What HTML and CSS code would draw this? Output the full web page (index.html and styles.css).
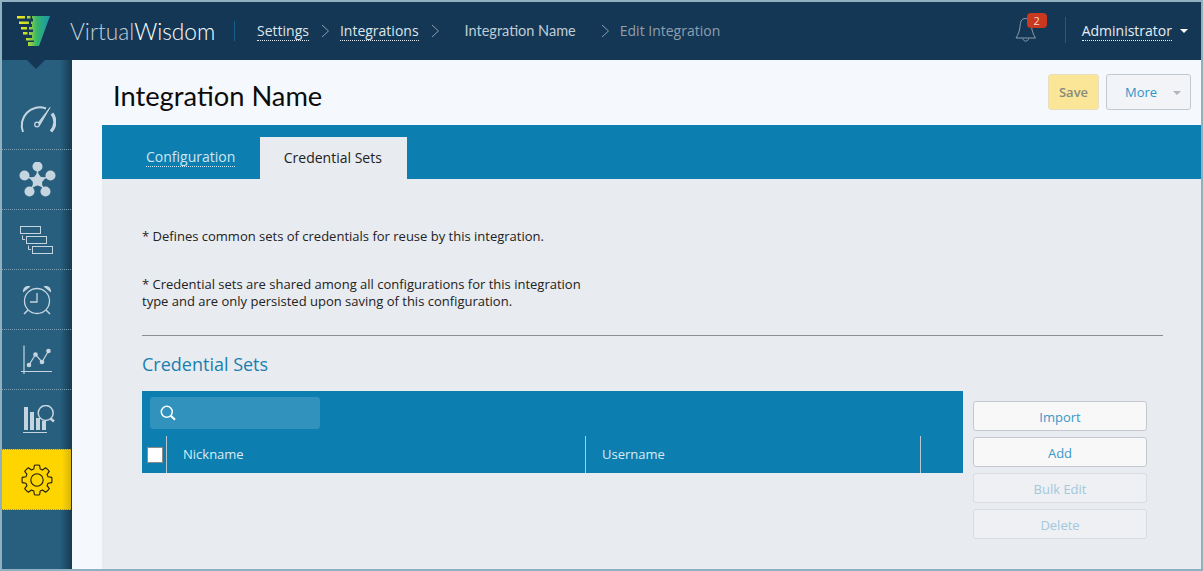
FILE: index.html
```html
<!DOCTYPE html>
<html lang="en">
<head>
    <meta charset="UTF-8">
    <meta name="viewport" content="width=device-width, initial-scale=1.0">
    <title>Edit Integration</title>
    <link rel="stylesheet" href="styles.css">
</head>
<body>
    <div class="frame">
        <header class="topbar">
            <div class="logo">
                <svg class="logo-mark" width="34" height="32" viewBox="0 0 34 32">
                    <defs>
                        <linearGradient id="funnel" gradientUnits="userSpaceOnUse" x1="0" y1="0" x2="33" y2="0">
                            <stop offset="0" stop-color="#f7e81b"/>
                            <stop offset="0.3" stop-color="#c5dc2b"/>
                            <stop offset="0.6" stop-color="#35b56a"/>
                            <stop offset="1" stop-color="#1a97b0"/>
                        </linearGradient>
                    </defs>
                    <g fill="url(#funnel)">
                        <path d="M15 0H33L22 30H11V26H17V24.500H9V22H15V19H12V16H16V13.500H12V11H15V8H14V5.500H16V2.500H15Z"/>
                        <rect x="0" y="0" width="8" height="2.500"/>
                        <rect x="10" y="0" width="3.500" height="2.500"/>
                        <rect x="2" y="5.500" width="10" height="2.500"/>
                        <rect x="4" y="11" width="6" height="2.500"/>
                        <rect x="6" y="16" width="4.500" height="2.500"/>
                    </g>
                </svg>
                <span class="logo-text"><span class="logo-thin">Virtual</span>Wisdom</span>
            </div>
            <nav class="crumbs">
                <a class="crumb link">Settings</a>
                <svg class="chev" width="9" height="14" viewBox="0 0 9 14"><path d="M1 1l6.500 6L1 13" fill="none" stroke="#8b9fb0" stroke-width="1"/></svg>
                <a class="crumb link">Integrations</a>
                <svg class="chev" width="9" height="14" viewBox="0 0 9 14"><path d="M1 1l6.500 6L1 13" fill="none" stroke="#8b9fb0" stroke-width="1"/></svg>
                <span class="crumb name">Integration Name</span>
                <svg class="chev" width="9" height="14" viewBox="0 0 9 14"><path d="M1 1l6.500 6L1 13" fill="none" stroke="#8b9fb0" stroke-width="1"/></svg>
                <span class="crumb current">Edit Integration</span>
            </nav>
            <div class="user-area">
                <div class="bell">
                    <svg width="22" height="26" viewBox="0 0 22 26">
                        <path d="M10.500 1.500C6 1.500 5.500 5 5 10 4.600 14 3 18 1 21H20.500C18.500 18 17 14 16.500 10 16 5 15 1.500 10.500 1.500Z" fill="none" stroke="#8a9cab" stroke-width="1"/>
                        <path d="M8 21.500C8 25 13.500 25 13.500 21.500" fill="none" stroke="#8a9cab" stroke-width="1"/>
                    </svg>
                    <span class="badge">2</span>
                </div>
                <a class="user link">Administrator</a>
                <span class="caret"></span>
            </div>
        </header>
        <div class="main">
            <aside class="sidenav">
                <span class="notch"></span>
                <div class="nav-item">
                    <svg width="38" height="30" viewBox="0 0 38 30" fill="none" stroke="#c5d5df">
                        <path d="M5 27A18 18 0 0 1 28 3.500" stroke-width="2"/>
                        <path d="M34 8.500C38 14 38 21 33 26.500" stroke-width="3.200"/>
                        <circle cx="19" cy="19.500" r="2.300" stroke-width="1.300"/>
                        <path d="M20.500 17.500L32 2.500 21.500 20.500" stroke-width="1" fill="#c5d5df"/>
                    </svg>
                </div>
                <div class="nav-item">
                    <svg width="38" height="36" viewBox="0 0 38 36" fill="#c5d5df" stroke="#c5d5df">
                        <circle cx="19.500" cy="4.500" r="5" stroke="none"/>
                        <circle cx="6.500" cy="13.500" r="5" stroke="none"/>
                        <circle cx="32.500" cy="13.500" r="5" stroke="none"/>
                        <circle cx="11.500" cy="29.500" r="5" stroke="none"/>
                        <circle cx="27.500" cy="29.500" r="5" stroke="none"/>
                        <path d="M19.500 12L21.700 15.400 25.700 16.500 23.100 19.700 23.300 23.800 19.500 22.300 15.700 23.800 15.900 19.700 13.300 16.500 17.300 15.400Z" stroke-width="2" stroke-linejoin="round"/>
                        <path d="M19.500 8v6M9 15l7 2M30 15l-7 2M13 27l3-4M26 27l-3-4" stroke-width="1.500"/>
                    </svg>
                </div>
                <div class="nav-item">
                    <svg width="36" height="30" viewBox="0 0 36 30" fill="none" stroke="#c5d5df" stroke-width="1">
                        <rect x="1.500" y="1.500" width="20" height="7"/>
                        <rect x="7.500" y="11.500" width="20" height="7"/>
                        <rect x="13.500" y="21.500" width="20" height="7"/>
                        <path d="M3.500 10.500v4h2.500M9.500 20.500v4h2.500"/>
                    </svg>
                </div>
                <div class="nav-item">
                    <svg width="32" height="32" viewBox="0 0 32 32" fill="none" stroke="#c5d5df">
                        <circle cx="16" cy="17" r="12.500" stroke-width="1.300"/>
                        <path d="M16 9v9H9" stroke-width="1.300"/>
                        <path d="M2 8.500C1.500 4 5 1 9.500 2.500z" fill="#c5d5df" stroke="none"/>
                        <path d="M30 8.500C30.500 4 27 1 22.500 2.500z" fill="#c5d5df" stroke="none"/>
                        <path d="M7 26l-4 4M25 26l4 4" stroke-width="1.500"/>
                    </svg>
                </div>
                <div class="nav-item">
                    <svg width="32" height="30" viewBox="0 0 32 30" fill="#c5d5df" stroke="#c5d5df">
                        <path d="M3 .5V29M0 26.500h31" fill="none" stroke-width="1.200"/>
                        <path d="M8 20l6.500-10.500L21 17 27.500 6" fill="none" stroke-width="1.200"/>
                        <circle cx="8" cy="20" r="2.300" stroke="none"/>
                        <circle cx="14.500" cy="9.500" r="2.300" stroke="none"/>
                        <circle cx="21" cy="17" r="2.300" stroke="none"/>
                        <circle cx="27.500" cy="6" r="2.300" stroke="none"/>
                    </svg>
                </div>
                <div class="nav-item">
                    <svg width="36" height="30" viewBox="0 0 36 30" fill="#c5d5df">
                        <rect x="5" y="2" width="4" height="23"/>
                        <rect x="11" y="7" width="4" height="18"/>
                        <rect x="17" y="13" width="4" height="12"/>
                        <rect x="23" y="16" width="4" height="9"/>
                        <rect x="4" y="27" width="24" height="1"/>
                        <circle cx="26.700" cy="8" r="7.500" fill="#285f7e" stroke="#c5d5df" stroke-width="1.500"/>
                        <path d="M31.500 13.500l3.500 3" stroke="#c5d5df" stroke-width="2.500"/>
                    </svg>
                </div>
                <div class="nav-item active">
                    <svg width="32" height="32" viewBox="0 0 32 32" fill="none" stroke="#1c1c10" stroke-width="1.100" stroke-linejoin="round">
                        <circle cx="16" cy="16" r="6.200"/>
                        <path d="M12.830 4.950L13.400 1.230A15 15 0 0 1 18.600 1.230L19.170 4.950A11.500 11.500 0 0 1 21.570 5.950L24.610 3.720A15 15 0 0 1 28.280 7.390L26.050 10.430A11.500 11.500 0 0 1 27.050 12.830L30.770 13.400A15 15 0 0 1 30.770 18.600L27.050 19.170A11.500 11.500 0 0 1 26.050 21.570L28.280 24.610A15 15 0 0 1 24.610 28.280L21.570 26.050A11.500 11.500 0 0 1 19.170 27.050L18.600 30.770A15 15 0 0 1 13.400 30.770L12.830 27.050A11.500 11.500 0 0 1 10.430 26.050L7.390 28.280A15 15 0 0 1 3.720 24.610L5.950 21.570A11.500 11.500 0 0 1 4.950 19.170L1.230 18.600A15 15 0 0 1 1.230 13.400L4.950 12.830A11.500 11.500 0 0 1 5.950 10.430L3.720 7.390A15 15 0 0 1 7.390 3.720L10.430 5.950A11.500 11.500 0 0 1 12.830 4.950Z"/>
                    </svg>
                </div>
            </aside>
            <div class="content">
                <div class="page-head">
                    <h1 class="page-title">Integration Name</h1>
                    <div class="head-actions">
                        <button class="btn-save">Save</button>
                        <button class="btn-more">More<span class="more-caret"></span></button>
                    </div>
                </div>
                <div class="tabs">
                    <a class="tab link">Configuration</a>
                    <a class="tab active">Credential Sets</a>
                </div>
                <div class="panel">
                    <p class="note first">* Defines common sets of credentials for reuse by this integration.</p>
                    <p class="note">* Credential sets are shared among all configurations for this integration<br>type and are only persisted upon saving of this configuration.</p>
                    <hr class="rule">
                    <h2 class="section-title">Credential Sets</h2>
                    <div class="table-row">
                        <div class="table">
                            <div class="table-search">
                                <div class="search-box">
                                    <svg width="16" height="16" viewBox="0 0 16 16" fill="none" stroke="#fff">
                                        <circle cx="6.800" cy="6.800" r="5.500" stroke-width="1.500"/>
                                        <path d="M10.800 10.800l4.200 4" stroke-width="2"/>
                                    </svg>
                                </div>
                            </div>
                            <div class="table-head">
                                <div class="cell check"><span class="checkbox"></span></div>
                                <div class="cell nick">Nickname</div>
                                <div class="cell username">Username</div>
                                <div class="cell last"></div>
                            </div>
                        </div>
                        <div class="side-actions">
                            <button class="side-btn">Import</button>
                            <button class="side-btn">Add</button>
                            <button class="side-btn disabled">Bulk Edit</button>
                            <button class="side-btn disabled">Delete</button>
                        </div>
                    </div>
                </div>
            </div>
        </div>
    </div>
</body>
</html>
```

FILE: styles.css
```css
html, body {
    margin: 0;
    height: 100%;
}
body {
    font-family: "Open Sans", Arial, sans-serif;
    font-size: 13px;
    color: #222;
    background: #e8ebf0;
}
.frame {
    height: 571px;
    box-sizing: border-box;
    border: 2px solid #8fb0bf;
    display: flex;
    flex-direction: column;
    overflow: hidden;
}
.link {
    border-bottom: 1px dotted currentColor;
}

/* top bar */
.topbar {
    flex: none;
    height: 58px;
    background: #143755;
    display: flex;
    align-items: center;
    color: #fff;
}
.logo {
    display: flex;
    align-items: center;
    width: 233px;
    height: 20px;
    border-right: 1px solid #17608a;
    padding-left: 15px;
    flex: none;
    box-sizing: border-box;
}
.logo-mark {
    flex: none;
    margin-top: 1px;
}
.logo-text {
    margin-left: 19px;
    font-family: Lato, sans-serif;
    font-weight: 300;
    font-size: 22.700px;
    color: #fff;
}
.logo-thin {
    color: #c3ced8;
}
.crumbs {
    display: flex;
    align-items: center;
    margin-left: 22px;
    font-size: 14px;
    color: #dfe6ec;
}
.crumb {
    line-height: 18px;
}
.chev {
    margin: 0 10px 0 12px;
}
.crumb.name {
    font-family: Lato, sans-serif;
    font-size: 14.500px;
    color: #bfccd6;
    margin-left: 15px;
}
.chev:nth-of-type(3) {
    margin: 0 10px 0 25px;
}
.crumb.current {
    color: #8f9fad;
}
.user-area {
    margin-left: auto;
    display: flex;
    align-items: center;
    padding-right: 13px;
}
.bell {
    position: relative;
    width: 50px;
    height: 26px;
    border-right: 1px solid #17608a;
    margin-right: 16px;
    margin-top: -2px;
}
.badge {
    position: absolute;
    left: 12px;
    top: -4px;
    width: 20px;
    height: 15px;
    background: #c8391f;
    border-radius: 4px;
    color: #f3d9d2;
    font-size: 11px;
    line-height: 15px;
    text-align: center;
}
.user {
    font-size: 14px;
    line-height: 18px;
    color: #e8edf2;
}
.caret {
    width: 0;
    height: 0;
    margin-left: 8px;
    border-left: 4px solid transparent;
    border-right: 4px solid transparent;
    border-top: 4px solid #fff;
}

/* left nav */
.main {
    flex: 1;
    display: flex;
    min-height: 0;
}
.sidenav {
    position: relative;
    flex: none;
    width: 70px;
    padding-top: 30px;
    box-sizing: border-box;
    background: linear-gradient(to right, #285f7e 0, #285f7e 58px, #143a52 70px);
}
.notch {
    position: absolute;
    left: 25px;
    top: 0;
    border-left: 9px solid transparent;
    border-right: 9px solid transparent;
    border-top: 9px solid #143755;
}
.nav-item {
    height: 60px;
    box-sizing: border-box;
    margin-right: 1px;
    border-bottom: 1px dotted #7f9fb2;
    display: flex;
    align-items: center;
    justify-content: center;
}
.nav-item.active {
    height: 61px;
    background: linear-gradient(to right, #ffd500 0, #ffd500 60px, #d9b60c 69px);
    border-top: 1px dotted #a8971c;
    border-bottom: 1px dotted #a8971c;
    margin-top: -1px;
}

/* page */
.content {
    flex: 1;
    min-width: 0;
    background: #f5f8fc;
    display: flex;
    flex-direction: column;
}
.page-head {
    flex: none;
    height: 65px;
    display: flex;
    align-items: flex-start;
    justify-content: space-between;
}
.page-title {
    margin: 17px 0 0 41px;
    font-family: Lato, sans-serif;
    font-size: 27.300px;
    line-height: 38px;
    font-weight: 400;
    color: #0c0c0c;
}
.head-actions {
    display: flex;
    gap: 7px;
    margin: 14px 10px 0 0;
}
.btn-save, .btn-more {
    font-family: inherit;
    font-size: 13px;
    height: 36px;
    border-radius: 3px;
    padding: 0;
}
.btn-save {
    width: 51px;
    background: #fbe596;
    border: 1px solid #e6e0c0;
    color: #8a8a7e;
    font-weight: 600;
}
.btn-more {
    width: 85px;
    background: #f2f4f8;
    border: 1px solid #c3c9cf;
    color: #2f95c8;
    display: flex;
    align-items: center;
    padding-left: 18px;
    position: relative;
}
.more-caret {
    position: absolute;
    right: 9px;
    top: 16px;
    border-left: 4px solid transparent;
    border-right: 4px solid transparent;
    border-top: 4px solid #b0b6bc;
}
.tabs {
    flex: none;
    height: 54px;
    margin-left: 30px;
    box-sizing: border-box;
    background: #0d7eb0;
    display: flex;
    align-items: flex-end;
    padding-left: 44px;
}
.tab {
    font-size: 14px;
    line-height: 18px;
}
.tab.link {
    color: #cfe6f1;
    margin-bottom: 12px;
    margin-right: 25px;
}
.tab.active {
    width: 147px;
    height: 42px;
    line-height: 42px;
    box-sizing: border-box;
    padding-right: 2px;
    text-align: center;
    background: #e8ebf0;
    color: #222;
}
.panel {
    flex: 1;
    margin-left: 30px;
    padding: 0 38px 0 40px;
    background: #e8ebf0;
}
.note {
    margin: 31px 0 0;
    font-size: 13px;
    line-height: 17px;
    color: #222;
}
.note.first {
    margin-top: 49px;
}
.rule {
    margin: 25px 0 0;
    border: none;
    border-top: 1px solid #8a8f94;
}
.section-title {
    margin: 17px 0 0;
    font-size: 18px;
    line-height: 22px;
    font-weight: 400;
    color: #1a7fae;
}

/* credential table */
.table-row {
    display: flex;
    align-items: flex-start;
    margin-top: 16px;
}
.table {
    flex: none;
    width: 821px;
    background: #0d7eb0;
}
.table-search {
    height: 45px;
    padding: 6px 8px 0;
    box-sizing: border-box;
}
.search-box {
    width: 170px;
    height: 32px;
    background: #3092bd;
    border-radius: 3px;
    display: flex;
    align-items: center;
    padding-left: 10px;
    box-sizing: border-box;
}
.table-head {
    display: grid;
    grid-template-columns: 25px 419px 335px 42px;
    height: 37px;
    color: #d9ecf5;
    font-size: 13px;
}
.cell {
    display: flex;
    align-items: center;
    padding-left: 16px;
    box-sizing: border-box;
    border-right: 1px solid #b9c8d0;
}
.cell.check {
    padding-left: 5px;
}
.cell.last {
    border-right: none;
}
.cell.nick, .cell.username {
    padding-bottom: 2px;
}
.checkbox {
    width: 16px;
    height: 16px;
    box-sizing: border-box;
    background: #fff;
    border: 1px solid #8c8c8c;
}
.side-actions {
    display: flex;
    flex-direction: column;
    gap: 6px;
    margin: 10px 0 0 10px;
}
.side-btn {
    width: 174px;
    height: 30px;
    font-family: inherit;
    font-size: 13px;
    background: #f8f8f9;
    border: 1px solid #c3c9cf;
    border-radius: 3px;
    color: #3a97c8;
    padding: 2px 0 0;
}
.side-btn.disabled {
    background: #eef0f3;
    border-color: #d9dce0;
    color: #a3c8de;
}
```
